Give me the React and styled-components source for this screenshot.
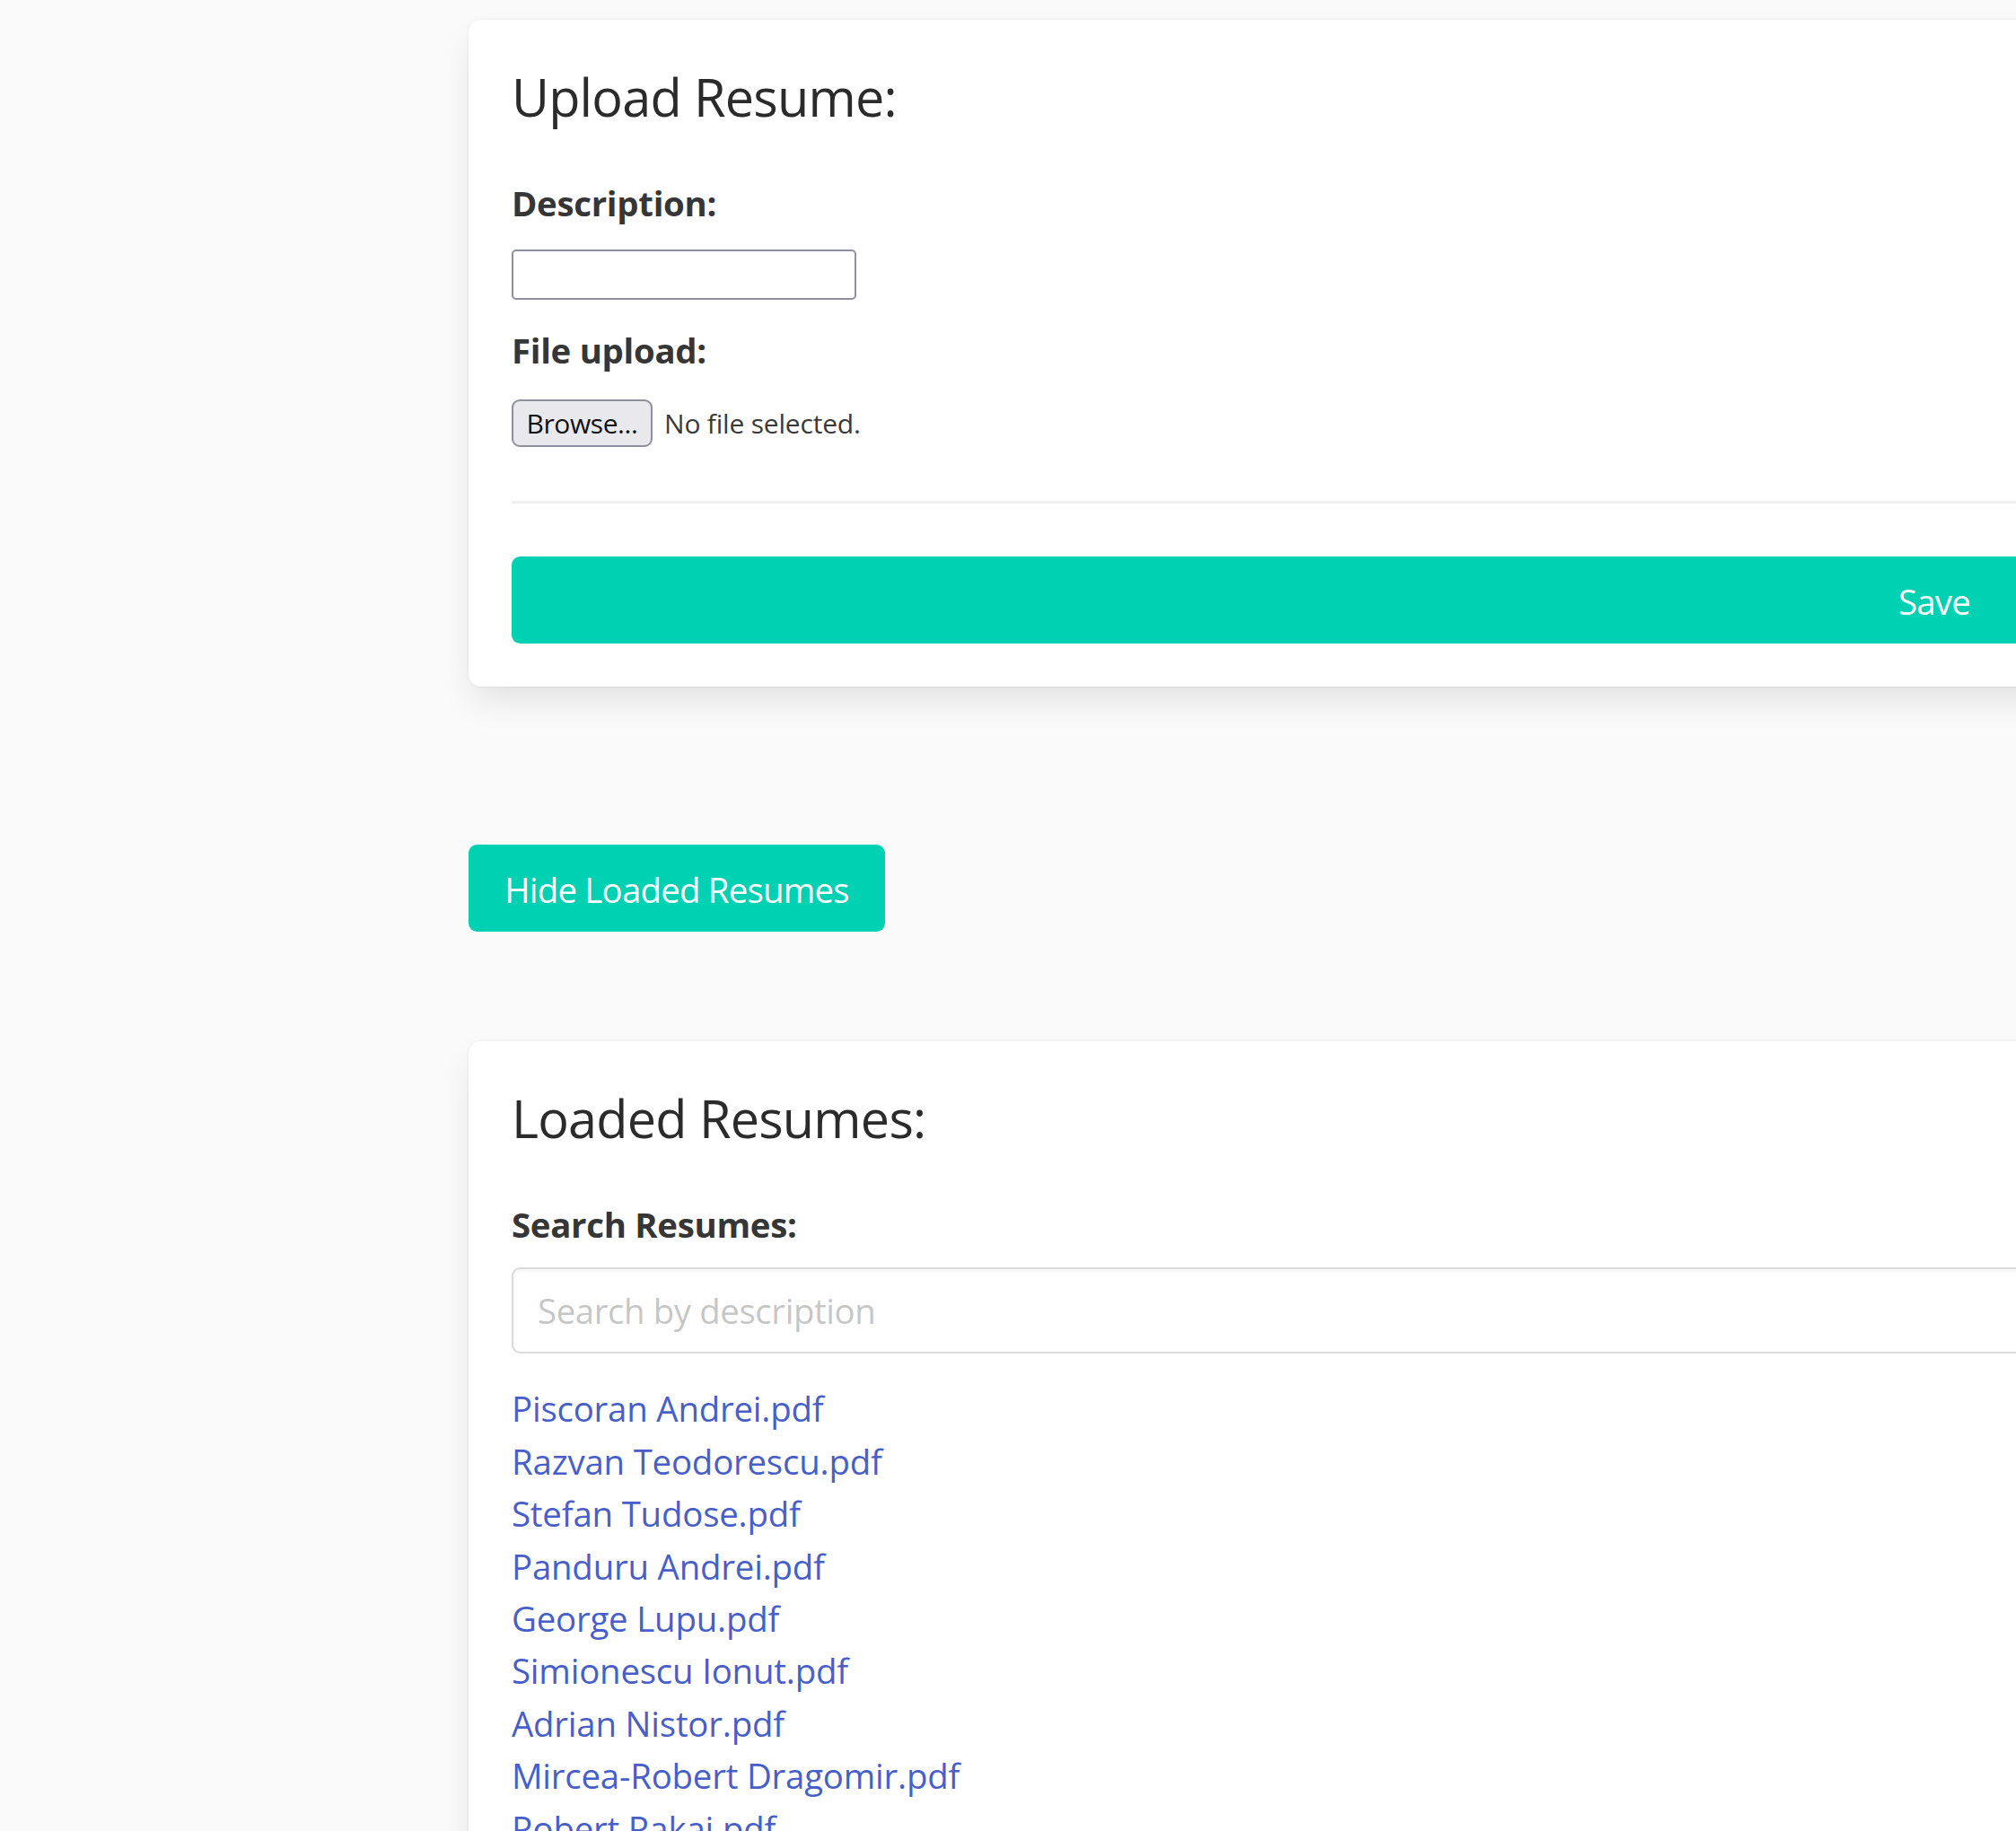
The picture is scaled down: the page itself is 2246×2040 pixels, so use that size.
import React from 'react';
import styled, { createGlobalStyle } from 'styled-components';

const theme = {
  primary: '#00D1B2',
  text: '#363636',
  title: '#2b2b2b',
  link: '#485FC7',
  bg: '#FAFAFA',
};

const GlobalStyle = createGlobalStyle`
  html, body {
    margin: 0;
    padding: 0;
    background: ${theme.bg};
    overflow: hidden;
  }
  body {
    font-family: 'Open Sans', 'Noto Sans', sans-serif;
    color: ${theme.text};
  }
`;

const Page = styled.div`
  display: flex;
  flex-direction: column;
  align-items: flex-start;
  padding: 22px 0 0 522px;
  width: 3300px;
`;

const Box = styled.div`
  box-sizing: border-box;
  width: 3266px;
  background: #fff;
  border-radius: 14px;
  padding: 48px;
  box-shadow: 0 19px 38px -5px rgba(10, 10, 10, 0.1), 0 0 0 2px rgba(10, 10, 10, 0.02);
  display: flex;
  flex-direction: column;
  align-items: flex-start;
  margin-top: ${props => props.mt || '0'};
`;

const Title = styled.h3`
  margin: 0;
  padding-top: 3px;
  font-size: 57.6px;
  line-height: 1.2;
  font-weight: 400;
  letter-spacing: -0.8px;
  color: ${theme.title};
`;

const Label = styled.label`
  display: block;
  margin-top: ${props => props.mt || '0'};
  font-size: 38.4px;
  line-height: 57.6px;
  font-weight: 700;
  letter-spacing: -0.3px;
  color: ${theme.text};
`;

const PlainInput = styled.input`
  box-sizing: border-box;
  margin-top: 22px;
  width: 384px;
  height: 56px;
  border: 2.4px solid #8f8f9d;
  border-radius: 5px;
  background: #fff;
  font-size: 32px;
  padding: 0 6px;
`;

const FileRow = styled.div`
  display: flex;
  align-items: center;
  gap: 13px;
  margin-top: 26px;
`;

const BrowseButton = styled.button`
  box-sizing: border-box;
  height: 53px;
  width: 157px;
  padding: 0;
  border: 2.4px solid #8f8f9d;
  border-radius: 9px;
  background: #e9e9ed;
  color: #111;
  font-family: 'Open Sans', sans-serif;
  font-size: 30px;
  letter-spacing: -0.4px;
  line-height: 1;
`;

const FileName = styled.span`
  font-size: 30px;
  letter-spacing: -0.2px;
  color: #3a3a3a;
`;

const Divider = styled.hr`
  align-self: stretch;
  border: none;
  height: 2.4px;
  background: #f0f0f0;
  margin: 60px 0 59px;
`;

const Button = styled.button`
  box-sizing: border-box;
  height: 97px;
  width: ${props => props.full ? '100%' : props.width || 'auto'};
  border: none;
  border-radius: 9.6px;
  background: ${theme.primary};
  color: #fff;
  font-family: 'Open Sans', sans-serif;
  font-size: 38.4px;
  letter-spacing: -0.8px;
  padding: 4px 0 0;
  display: flex;
  align-items: center;
  justify-content: center;
  margin-top: ${props => props.mt || '0'};
  cursor: pointer;
`;

const SearchInput = styled.input`
  box-sizing: border-box;
  align-self: stretch;
  margin-top: 19px;
  height: 96px;
  border: 2.4px solid #dbdbdb;
  border-radius: 9.6px;
  box-shadow: inset 0 2.4px 4.8px rgba(10, 10, 10, 0.05);
  padding: 0 27px;
  font-family: 'Open Sans', sans-serif;
  font-size: 38.4px;
  letter-spacing: -0.4px;
  color: ${theme.text};
  outline: none;

  &::placeholder {
    color: rgba(54, 54, 54, 0.3);
  }
`;

const FileList = styled.div`
  display: flex;
  flex-direction: column;
  align-items: flex-start;
  margin-top: 32px;
`;

const FileLink = styled.a`
  font-size: 38.4px;
  line-height: 58.4px;
  letter-spacing: -0.2px;
  color: ${theme.link};
  text-decoration: none;
`;

const resumes = [
  'Piscoran Andrei.pdf',
  'Razvan Teodorescu.pdf',
  'Stefan Tudose.pdf',
  'Panduru Andrei.pdf',
  'George Lupu.pdf',
  'Simionescu Ionut.pdf',
  'Adrian Nistor.pdf',
  'Mircea-Robert Dragomir.pdf',
  'Robert Rakai.pdf',
];

export default function App() {
  return (
    <>
      <GlobalStyle />
      <Page>
        <Box>
          <Title>Upload Resume:</Title>
          <Label mt="56px">Description:</Label>
          <PlainInput type="text" />
          <Label mt="28px">File upload:</Label>
          <FileRow>
            <BrowseButton>Browse...</BrowseButton>
            <FileName>No file selected.</FileName>
          </FileRow>
          <Divider />
          <Button full>Save</Button>
        </Box>

        <Button width="464px" mt="176px">Hide Loaded Resumes</Button>

        <Box mt="122px">
          <Title>Loaded Resumes:</Title>
          <Label mt="56px">Search Resumes:</Label>
          <SearchInput type="text" placeholder="Search by description" />
          <FileList>
            {resumes.map(name => (
              <FileLink key={name} href="#">{name}</FileLink>
            ))}
          </FileList>
        </Box>
      </Page>
    </>
  );
}
